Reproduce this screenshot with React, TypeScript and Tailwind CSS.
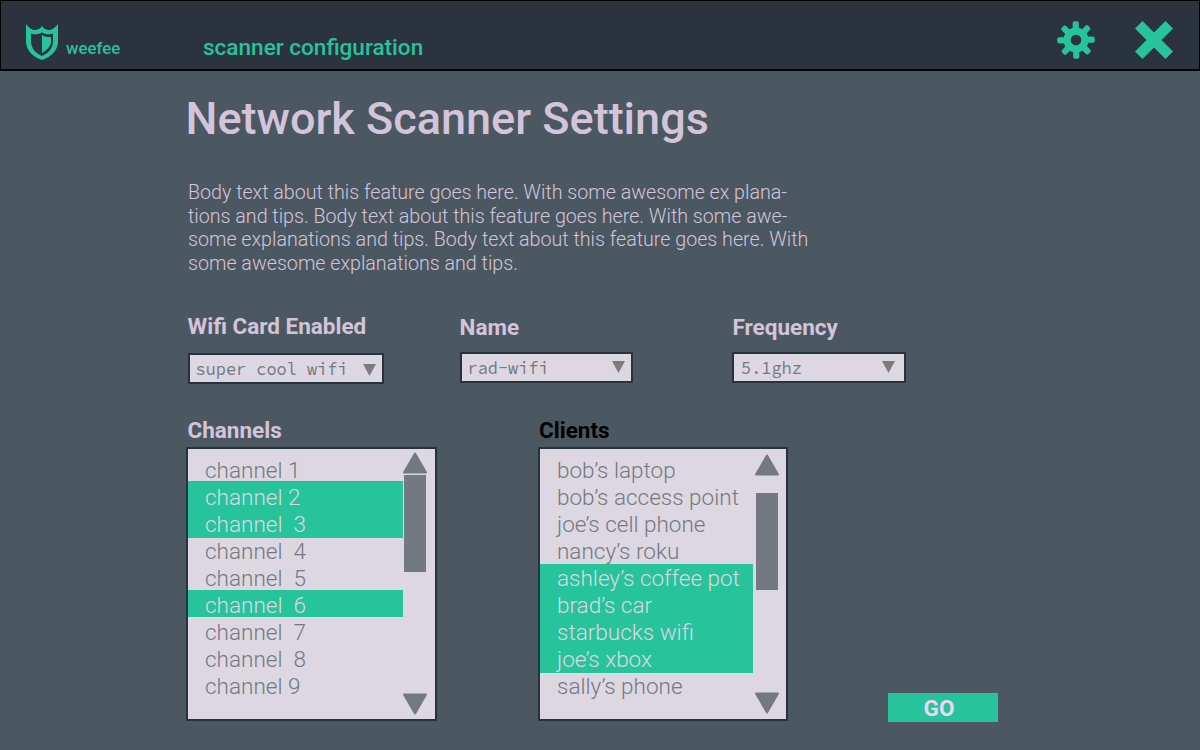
type Item = { label: string; className?: string };

const selected = "bg-[#27c39b] text-[#ddd7e2]";

const channels: Item[] = [
  { label: "channel 1" },
  { label: "channel 2", className: `-mt-[2px] h-[27px] pt-[2px] ${selected}` },
  { label: "channel  3", className: `-mb-[1px] h-[27px] pb-[1px] ${selected}` },
  { label: "channel  4" },
  { label: "channel  5" },
  { label: "channel  6", className: `-mt-[1px] mb-[1px] h-[26px] pt-[1px] ${selected}` },
  { label: "channel  7" },
  { label: "channel  8" },
  { label: "channel 9" },
];

const clients: Item[] = [
  { label: "bob’s laptop" },
  { label: "bob’s access point" },
  { label: "joe’s cell phone" },
  { label: "nancy’s roku" },
  { label: "ashley’s coffee pot", className: `h-[27px] ${selected}` },
  { label: "brad’s car", className: `h-[27px] ${selected}` },
  { label: "starbucks wifi", className: `h-[27px] ${selected}` },
  { label: "joe’s xbox", className: `-mb-[1px] h-[27px] pb-[1px] ${selected}` },
  { label: "sally’s phone" },
];

function Shield() {
  return (
    <svg className="h-[36px] w-[32px] shrink-0" viewBox="0 0 32 36" fill="#27c39b">
      <path
        fillRule="evenodd"
        d="M0 0C2.500 3.500 6 6.300 9.500 6C12.500 5.700 14.800 4 16 2C17.200 4 19.500 5.700 22.500 6C26 6.300 29.500 3.500 32 0V18C31.500 27 25 33 16 36C7 33 .5 27 0 18ZM5 9.500V18C5.500 24.500 9.500 29.200 16 32C22.500 29.200 26.500 24.500 27 18V9.500C23 11 19 10.500 16 8.200C13 10.500 9 11 5 9.500Z"
      />
      <path d="M16 11C18.500 12.800 21.500 13.400 25 13V18C24.500 22.500 21 26.500 16 29Z" />
    </svg>
  );
}

function Gear() {
  return (
    <svg className="h-[38px] w-[38px]" viewBox="-19 -19 38 38" fill="#27c39b">
      {[-1, 44, 89, 134].map((a) => (
        <rect key={a} x="-3.100" y="-18.800" width="6.200" height="37.600" rx="2" transform={`rotate(${a})`} />
      ))}
      <circle r="12.500" />
      <circle r="5.300" fill="#2b333e" />
    </svg>
  );
}

function Cross() {
  return (
    <svg className="h-[38px] w-[38px]" viewBox="0 0 38 38" fill="#27c39b">
      <path d="M7.500 0 19 11.500 30.500 0 38 7.500 26.500 19 38 30.500 30.500 38 19 26.500 7.500 38 0 30.500 11.500 19 0 7.500Z" />
    </svg>
  );
}

function Arrow({ down }: { down?: boolean }) {
  return (
    <svg
      className={down ? "h-[22px] w-[24px] rotate-180" : "h-[22px] w-[24px]"}
      viewBox="0 0 24 22"
      fill="#737980"
      stroke="#737980"
      strokeWidth="2"
      strokeLinejoin="round"
    >
      <path d="M12 1.500 23 20.500H1Z" />
    </svg>
  );
}

function Select({ value, className, marker = "" }: { value: string; className: string; marker?: string }) {
  return (
    <button
      className={`flex items-center justify-between border-2 border-[#28333f] bg-[#ddd7e2] pl-[6px] font-['Source_Code_Pro','DejaVu_Sans_Mono',monospace] text-[16.9px] text-[#737980] ${className}`}
    >
      <span className="whitespace-nowrap pt-[2px]">{value}</span>
      <svg className={`h-[12px] w-[13px] shrink-0 ${marker}`} viewBox="0 0 13 12" fill="#7c7c7f">
        <path d="M0 0H13L6.500 12Z" />
      </svg>
    </button>
  );
}

function ListBox({ items, list, bar }: { items: Item[]; list: string; bar: string }) {
  return (
    <div className="flex h-[274px] border-2 border-[#28333f] bg-[#ddd7e2] text-[22.5px] font-light leading-[28px] text-[#737980]">
      <ul className={`pt-[7px] ${list}`}>
        {items.map((i) => (
          <li key={i.label} className={`box-content whitespace-pre pl-[17px] ${i.className ?? "h-[27px]"}`}>
            {i.label}
          </li>
        ))}
      </ul>
      <div className={`flex flex-col items-center ${bar}`}>
        <Arrow />
        <div className="h-[97px] w-[22px] bg-[#737980]" />
        <div className="mt-auto">
          <Arrow down />
        </div>
      </div>
    </div>
  );
}

export default function App() {
  return (
    <div className="flex h-[750px] w-[1200px] flex-col overflow-hidden bg-[#4c5861] font-[Roboto,sans-serif] text-[#d4c4da]">
      <header className="flex h-[71px] shrink-0 border border-b-2 border-black bg-[#2b333e] pl-[25px] font-medium text-[#27c39b]">
        <div className="pt-[23px]">
          <Shield />
        </div>
        <span className="ml-[8px] mt-[36px] w-[137px] text-[16.8px] leading-[22px]">weefee</span>
        <span className="mt-[33px] text-[22.55px] leading-[28px]">scanner configuration</span>
        <div className="ml-auto flex gap-[40px] pr-[26px] pt-[20px]">
          <Gear />
          <Cross />
        </div>
      </header>
      <main className="flex flex-col pl-[186px]">
        <h1 className="-ml-[0.5px] mt-[21px] h-[54px] text-[45px] font-medium leading-[54px]">Network Scanner Settings</h1>
        <p className="mt-[35px] whitespace-pre pl-[2px] text-[19.67px] font-light leading-[23.65px]">
          {"Body text about this feature goes here. With some awesome ex plana-\ntions and tips. Body text about this feature goes here. With some awe-\nsome explanations and tips. Body text about this feature goes here. With\nsome awesome explanations and tips."}
        </p>
        <div className="mt-[36.2px] flex h-[71px] pl-[1.5px]">
          <div className="w-[272px]">
            <h2 className="text-[22.5px] font-bold leading-[28px]">Wifi Card Enabled</h2>
            <Select value="super cool wifi" className="mt-[13px] h-[31px] w-[196px] pr-[6px]" marker="mt-[4px]" />
          </div>
          <div className="w-[272.5px] pt-[1px]">
            <h2 className="text-[22.5px] font-bold leading-[28px]">Name</h2>
            <Select value="rad-wifi" className="mt-[11px] h-[31px] w-[173.5px] pr-[6.5px]" />
          </div>
          <div className="pt-[1px]">
            <h2 className="pl-[0.5px] text-[22.5px] font-bold leading-[28px]">Frequency</h2>
            <Select value="5.1ghz" className="mt-[11px] h-[31px] w-[174px] pl-[7px] pr-[9px]" />
          </div>
        </div>
        <div className="mt-[32px] flex">
          <section className="w-[251px]">
            <h2 className="h-[32px] pl-[1.5px] text-[22.5px] font-bold leading-[31px]">Channels</h2>
            <ListBox items={channels} list="w-[215px]" bar="gap-[1px] pb-[4px] pt-[3px]" />
          </section>
          <section className="ml-[101px] w-[250px]">
            <h2 className="h-[32px] pl-[1px] text-[22.5px] font-bold leading-[31px] text-black">Clients</h2>
            <ListBox items={clients} list="w-[213px]" bar="gap-[17px] pb-[5px] pt-[5px] pl-[2px]" />
          </section>
          <button className="-mb-[1px] ml-[100px] mt-auto h-[29px] w-[110px] bg-[#27c39b] pr-[8px] text-[22.5px] font-bold leading-[30px] text-[#f0d4f4]">
            GO
          </button>
        </div>
      </main>
    </div>
  );
}
